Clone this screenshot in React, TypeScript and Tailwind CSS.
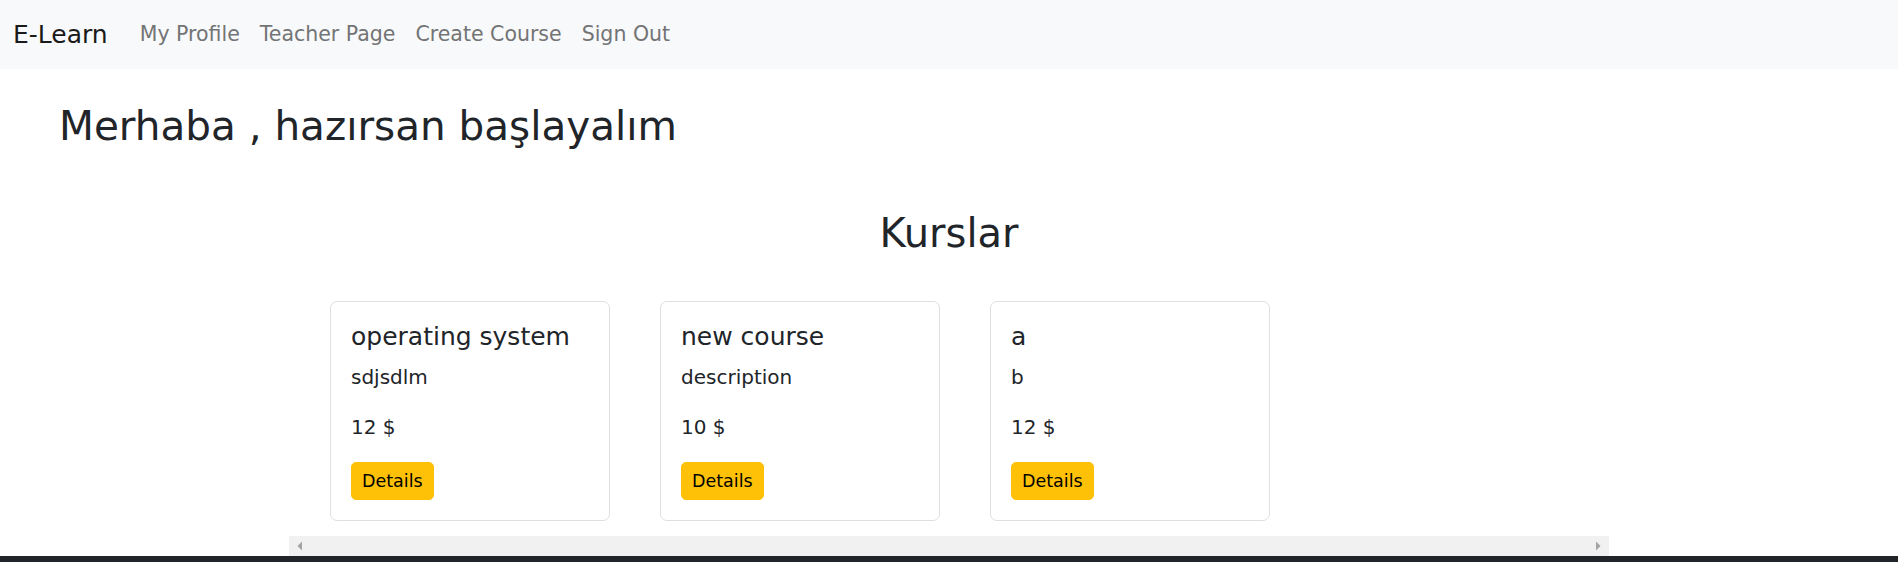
import React from "react";

type Course = {
	id: number;
	name: string;
	description: string;
	price: number;
};

const courses: Course[] = [
	{ id: 1, name: "operating system", description: "sdjsdlm", price: 12 },
	{ id: 2, name: "new course", description: "description", price: 10 },
	{ id: 3, name: "a", description: "b", price: 12 },
];

const navLinks = ["My Profile", "Teacher Page", "Create Course", "Sign Out"];

// *** Navbar ***
const Navbar = () => {
	return (
		<nav className="flex h-[69px] items-center bg-[#f8f9fa] pl-[13px]">
			<a href="#" className="mr-[22px] text-[25px] leading-[1.5] text-[#1a1a1a]">
				E-Learn
			</a>
			<ul className="flex items-center">
				{navLinks.map((link) => (
					<li key={link}>
						<a href="#" className="block px-[10px] text-[20.5px] leading-[1.5] text-[#737475] hover:text-[#333]">
							{link}
						</a>
					</li>
				))}
			</ul>
		</nav>
	);
};

// *** Single course card ***
const CourseCard = ({ course }: { course: Course }) => {
	return (
		<div className="w-[280px] shrink-0 rounded-[7px] border border-[#dedfe0] bg-white p-5">
			<h5 className="mb-[10px] text-[25px] leading-[1.2] text-[#212529]">{course.name}</h5>
			<p className="mb-5 text-[20px] leading-[1.5] text-[#212529]">{course.description}</p>
			<p className="mb-5 text-[20px] leading-[1.5] text-[#212529]">{course.price} $</p>
			<button className="rounded-[5px] border border-[#ffc107] bg-[#ffc107] px-[10px] py-[5px] text-[17.5px] leading-[1.5] text-black">
				Details
			</button>
		</div>
	);
};

export default function App() {
	return (
		<div
			className="h-[562px] overflow-hidden bg-white"
			style={{ fontFamily: '"DejaVu Sans", "Liberation Sans", sans-serif' }}
		>
			<Navbar />
			<h2 className="mt-[33px] pl-[59px] text-[40.5px] leading-[1.2] text-[#212529]">Merhaba , hazırsan başlayalım</h2>

			<h2 className="mt-[58px] text-center text-[40px] leading-[1.2] text-[#212529]">Kurslar</h2>

			<div className="mx-auto mt-[44px] w-[1320px]">
				<div className="flex gap-[50px] pb-[15px] pl-[41px]">
					{courses.map((course) => (
						<CourseCard key={course.id} course={course} />
					))}
				</div>
				{/* horizontal scrollbar of the course list */}
				<div className="flex h-[20px] items-center justify-between bg-[#f1f1f1] px-[8px]">
					<svg width="6" height="10" viewBox="0 0 6 10">
						<path d="M5 0.5 L0.5 5 L5 9.5 Z" fill="#a3a3a3" />
					</svg>
					<svg width="6" height="10" viewBox="0 0 6 10">
						<path d="M1 0.5 L5.5 5 L1 9.5 Z" fill="#a3a3a3" />
					</svg>
				</div>
			</div>

			<footer className="h-[80px] bg-[#212529]" />
		</div>
	);
}
